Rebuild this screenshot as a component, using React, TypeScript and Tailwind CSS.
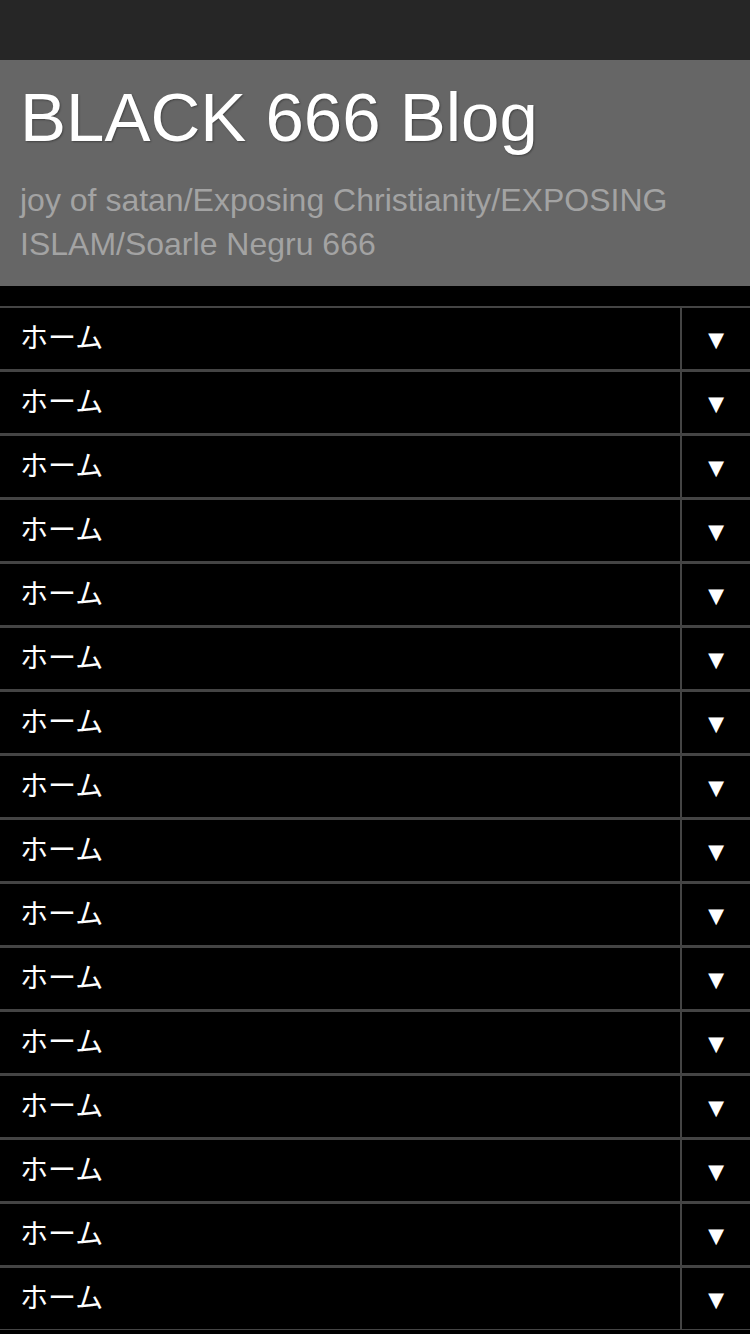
import React from 'react';

const items = Array.from({ length: 16 }, (_, i) => i);

export default function App() {
  return (
    <div className="min-h-screen bg-black font-['Liberation_Sans',Arial,sans-serif]">
      {/* Top bar */}
      <div className="h-[60px] bg-[#262626]" />

      {/* Header */}
      <div className="h-[226px] bg-[#666666] px-5 pt-[14px]">
        <h1 className="text-[69px] leading-[88px] text-white [text-shadow:1px_1px_2px_rgba(0,0,0,0.35)]">
          BLACK 666 Blog
        </h1>
        <p className="mt-[16px] text-[32px] leading-[44px] text-[#a3a3a3]">
          joy of satan/Exposing Christianity/EXPOSING ISLAM/Soarle Negru 666
        </p>
      </div>

      {/* Menu */}
      <div className="pt-5">
        {items.map((i) => (
          <div key={i} className="flex h-16 border-t-2 border-b border-[#444444]">
            <div className="flex flex-1 items-center px-5 pb-[5px] text-[28px] text-white font-['Noto_Sans_CJK_JP',sans-serif]">
              ホーム
            </div>
            <div className="flex w-[70px] items-center justify-center border-l-2 border-[#444444] pt-1 text-[27px] text-white">
              ▼
            </div>
          </div>
        ))}
      </div>
    </div>
  );
}
